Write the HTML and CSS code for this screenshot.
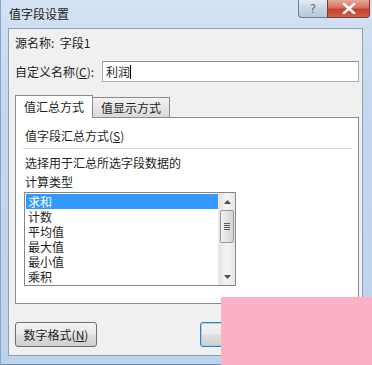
FILE: index.html
```html
<!DOCTYPE html>
<html lang="zh-CN">
<head>
    <meta charset="UTF-8">
    <title>值字段设置</title>
    <link rel="stylesheet" href="styles.css">
</head>
<body>
    <div class="window">
        <div class="titlebar">
            <span class="title">值字段设置</span>
            <div class="caption-buttons">
                <div class="cap-btn help">?</div>
                <div class="cap-btn close">
                    <svg width="14" height="11" viewBox="0 0 14 11">
                        <path d="M2 1 L12 10 M12 1 L2 10" stroke="#fff" stroke-width="2.6" stroke-linecap="square"/>
                    </svg>
                </div>
            </div>
        </div>

        <div class="client">
            <div class="source">源名称:&nbsp;&nbsp;字段1</div>

            <div class="name-row">
                <label class="name-label">自定义名称(<u>C</u>):</label>
                <div class="input">利润<span class="caret"></span></div>
            </div>

            <div class="tabs">
                <div class="tab active">值汇总方式</div>
                <div class="tab">值显示方式</div>
            </div>

            <div class="panel">
                <div class="group-title">值字段汇总方式(<u>S</u>)</div>
                <div class="separator"></div>
                <div class="hint">选择用于汇总所选字段数据的<br>计算类型</div>

                <div class="listbox">
                    <ul class="items">
                        <li class="selected">求和</li>
                        <li>计数</li>
                        <li>平均值</li>
                        <li>最大值</li>
                        <li>最小值</li>
                        <li>乘积</li>
                    </ul>
                    <div class="scrollbar">
                        <div class="arrow up">
                            <svg width="7" height="4" viewBox="0 0 7 4"><path d="M0 4 L3.5 0 L7 4 Z" fill="#4d4d4d"/></svg>
                        </div>
                        <div class="thumb">
                            <span></span><span></span><span></span><span></span>
                        </div>
                        <div class="track"></div>
                        <div class="arrow down">
                            <svg width="7" height="4" viewBox="0 0 7 4"><path d="M0 0 L7 0 L3.5 4 Z" fill="#4d4d4d"/></svg>
                        </div>
                    </div>
                </div>
            </div>

            <div class="footer">
                <button class="btn">数字格式(<u>N</u>)</button>
                <button class="btn default">确定</button>
            </div>
        </div>
    </div>

    <div class="cover"></div>
</body>
</html>
```

FILE: styles.css
```css
* {
    margin: 0;
    padding: 0;
    box-sizing: border-box;
}

body {
    width: 372px;
    height: 365px;
    overflow: hidden;
    position: relative;
    font-family: "Microsoft YaHei", "Noto Sans CJK SC", sans-serif;
    font-size: 12px;
    color: #1e1e1e;
    background: #bcd2ec;
}

.window {
    width: 372px;
    height: 365px;
    padding: 0 9px 8px 7px;
    display: flex;
    flex-direction: column;
    background: linear-gradient(180deg, #d3e2f3 0%, #c3d7ee 30%, #bdd3ed 100%);
    border-left: 1px solid #8aa3c2;
    border-bottom: 1px solid #6f88a8;
}

.titlebar {
    height: 28px;
    display: flex;
    align-items: flex-start;
    justify-content: space-between;
    position: relative;
}

.title {
    font-size: 12px;
    line-height: 28px;
    padding-left: 1px;
    color: #1a1a1a;
}

.caption-buttons {
    display: flex;
    margin-right: -7px;
}

.cap-btn {
    height: 18px;
    display: flex;
    align-items: center;
    justify-content: center;
    border: 1px solid #6d7d92;
    border-top: none;
}

.help {
    width: 29px;
    border-radius: 0 0 0 4px;
    border-right: none;
    background: linear-gradient(180deg, #e4ecf5 0%, #c9d6e6 50%, #b7c8dc 100%);
    color: #5c6f8a;
    font-family: "DejaVu Sans", sans-serif;
    font-size: 12px;
}

.close {
    width: 43px;
    border-radius: 0 0 4px 0;
    border-color: #7a3a34;
    background: linear-gradient(180deg, #e9a99a 0%, #d7705d 45%, #c4412c 55%, #d0604a 100%);
}

.client {
    flex: 1;
    display: flex;
    flex-direction: column;
    background: #f0f0f0;
    border: 1px solid #8e9fb6;
    padding: 6px 3px 0 6px;
}

.source {
    line-height: 16px;
}

.name-row {
    display: flex;
    align-items: center;
    margin-top: 10px;
}

.name-label {
    width: 87px;
}

.input {
    flex: 1;
    height: 21px;
    background: #fff;
    border: 1px solid #abadb3;
    border-top-color: #8f9299;
    padding-left: 3px;
    line-height: 19px;
    display: flex;
    align-items: center;
}

.caret {
    width: 1px;
    height: 14px;
    background: #000;
}

.tabs {
    display: flex;
    align-items: flex-end;
    margin-top: 13px;
    position: relative;
    z-index: 1;
}

.tab {
    height: 20px;
    padding: 0 8px;
    line-height: 19px;
    border: 1px solid #898c95;
    border-bottom: none;
    border-left: none;
    background: linear-gradient(180deg, #f2f2f2 0%, #e6e6e6 50%, #d9d9d9 100%);
}

.tab.active {
    height: 23px;
    width: 78px;
    padding: 0 0 0 8px;
    line-height: 21px;
    border-left: 1px solid #898c95;
    background: #fff;
    margin-bottom: -1px;
}

.panel {
    width: 344px;
    height: 187px;
    background: #fff;
    border: 1px solid #898c95;
    padding: 10px 6px 0 8px;
}

.group-title {
    line-height: 16px;
    padding-left: 1px;
}

.separator {
    height: 1px;
    background: #d5dfe5;
    margin: 4px 0 4px -1px;
}

.hint {
    line-height: 19px;
    padding-left: 1px;
}

.listbox {
    width: 212px;
    height: 94px;
    margin-top: 1px;
    border: 1px solid #828790;
    display: flex;
    padding: 1px 0 1px 1px;
}

.items {
    flex: 1;
    list-style: none;
    overflow: hidden;
    font-size: 12px;
}

.items li {
    height: 15px;
    line-height: 15px;
    padding-left: 2px;
}

.items li.selected {
    background: #3399ff;
    color: #fff;
}

.scrollbar {
    width: 17px;
    margin-top: -1px;
    margin-bottom: -1px;
    display: flex;
    flex-direction: column;
    background: linear-gradient(90deg, #e3e3e3, #f2f2f2 40%, #f2f2f2 60%, #e6e6e6);
    border-left: 1px solid #eaeaea;
}

.arrow {
    height: 17px;
    display: flex;
    align-items: center;
    justify-content: center;
}

.thumb {
    height: 33px;
    margin: 0 1px;
    border: 1px solid #979797;
    border-radius: 2px;
    background: linear-gradient(90deg, #f3f3f3, #e2e2e2 50%, #d6d6d6);
    display: flex;
    flex-direction: column;
    align-items: center;
    justify-content: center;
    gap: 1px;
}

.thumb span {
    width: 6px;
    height: 1px;
    background: #5a5a5a;
}

.track {
    flex: 1;
}

.footer {
    display: flex;
    margin-top: 18px;
    gap: 103px;
}

.btn {
    width: 82px;
    height: 25px;
    font-family: inherit;
    font-size: 12px;
    color: #1e1e1e;
    border: 1px solid #707070;
    border-radius: 3px;
    background: linear-gradient(180deg, #f2f2f2 0%, #ebebeb 45%, #dddddd 55%, #cfcfcf 100%);
}

.btn.default {
    border-color: #3c7fb1;
    box-shadow: inset 0 0 0 1px #9ed3f0;
}

.cover {
    position: absolute;
    left: 221px;
    top: 297px;
    right: 0;
    bottom: 0;
    background: #fab0c5;
}
```
